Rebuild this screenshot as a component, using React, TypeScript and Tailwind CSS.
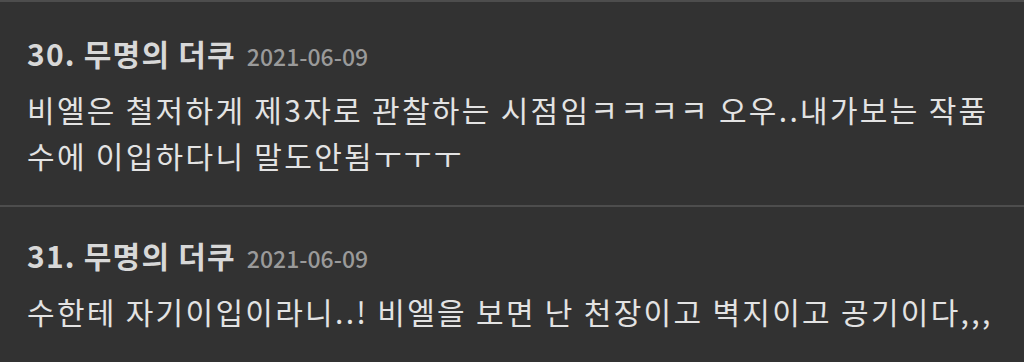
const comments = [
  {
    no: 30,
    name: "무명의 더쿠",
    date: "2021-06-09",
    body: "비엘은 철저하게 제3자로 관찰하는 시점임ㅋㅋㅋㅋ 오우..내가보는 작품 수에 이입하다니 말도안됨ㅜㅜㅜ",
  },
  {
    no: 31,
    name: "무명의 더쿠",
    date: "2021-06-09",
    body: "수한테 자기이입이라니..! 비엘을 보면 난 천장이고 벽지이고 공기이다,,,",
  },
];

export default function App() {
  return (
    <div
      className="w-[1024px] h-[362px] overflow-hidden bg-[#323232] border-t-2 border-[#4d4d4d]"
      style={{ fontFamily: '"Noto Sans CJK KR", "Noto Sans", sans-serif' }}
    >
      {comments.map((c, i) => (
        <div
          key={c.no}
          className={`pl-[27px] pr-[20px] pb-[27px] ${i === 0 ? "pt-[31px] border-b-2 border-[#4d4d4d]" : "pt-[28px]"}`}
        >
          <div className="flex items-baseline gap-[11px] leading-[40px]">
            <span className="text-[30px] font-bold tracking-[1.2px] text-[#d8d8d8]">
              {c.no}. {c.name}
            </span>
            <span className="text-[23px] font-medium text-[#9a9a9a]">{c.date}</span>
          </div>
          <p className="mt-[10px] text-[30px] leading-[46px] tracking-[2.3px] text-[#e3e3e3]">{c.body}</p>
        </div>
      ))}
    </div>
  );
}
